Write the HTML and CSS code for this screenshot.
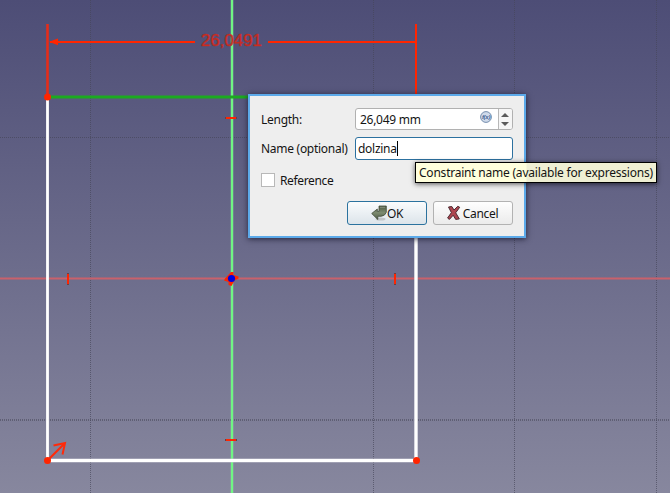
FILE: index.html
```html
<!DOCTYPE html>
<html lang="en">
<head>
<meta charset="utf-8">
<title>Sketch length constraint</title>
<link rel="stylesheet" href="styles.css">
</head>
<body>
<main class="viewport">
  <svg class="sketch" width="670" height="493" viewBox="0 0 670 493">
    <g class="grid">
      <path d="M90.5 0V493M373.5 0V493M514.5 0V493M656.5 0V493M0 137.5H670"/>
      <path class="grid-strong" d="M0 420H670"/>
    </g>
    <path class="axis-x" d="M0 278.5H670"/>
    <path class="axis-y-soft" d="M232 0V493"/>
    <path class="axis-y" d="M232 0V493"/>
    <path class="edge-soft" d="M416 97V460.5H47.5"/>
    <path class="edge" d="M47.5 97V460.5H416V97"/>
    <path class="edge-selected" d="M47 97H416"/>
    <path class="dimension dimension-left" d="M47.5 24V97"/>
    <path class="dimension" d="M416 24V97M50 42H195M268 42H416"/>
    <path class="marker" d="M49 41.7L58 38.5V45.2Z"/>
    <text class="dimension-text" x="201" y="46" textLength="61" lengthAdjust="spacingAndGlyphs">26,0491</text>
    <g class="tick-shadow"><path d="M225 118H237M225 440H237M68 273V285M395 273V285"/></g>
    <g class="tick"><path d="M226 118H236M226 440H236M68 274V284M395 274V284"/></g>
    <path class="marker" d="M231 272h2.500v3l5 1.500v2l-4 2-3 5.500-3-1v-3l-4.500-1.500 1-2z"/>
    <circle class="origin" cx="231.5" cy="278.5" r="3.6"/>
    <circle class="marker" cx="47.5" cy="97" r="3.5"/>
    <circle class="marker" cx="47.5" cy="460.5" r="3.5"/>
    <circle class="marker" cx="416.5" cy="460.5" r="3.5"/>
    <path class="arrow" d="M49 459L65 443M53.5 445.5L65 443L62.5 454.5"/>
  </svg>

  <form class="dialog">
    <div class="row row-length">
      <span class="label">Length:</span>
      <div class="field spin">
        <span class="value">26,049 mm</span>
        <svg class="expression" width="12" height="12" viewBox="0 0 12 12">
          <circle cx="6" cy="6" r="5.4"/>
          <text x="6" y="8.2" text-anchor="middle">f(x)</text>
        </svg>
        <svg class="stepper" width="14" height="20" viewBox="0 0 14 20">
          <path class="divider" d="M.5 0V20"/>
          <path class="step" d="M3 8L7 4L11 8ZM3 13H11L7 17Z"/>
        </svg>
      </div>
    </div>
    <div class="row row-name">
      <span class="label">Name (optional)</span>
      <div class="field name"><span>dolzina</span><i class="caret"></i></div>
    </div>
    <div class="row row-reference">
      <span class="checkbox"></span><span class="label-reference">Reference</span>
    </div>
    <div class="row buttons">
      <button type="button" class="button default">
        <svg width="16" height="16" viewBox="0 0 16 16">
          <defs><linearGradient id="leaf" x2="0" y2="1"><stop stop-color="#4e5b43"/><stop offset=".5" stop-color="#7d8b70"/><stop offset="1" stop-color="#4d5a43"/></linearGradient></defs>
          <ellipse cx="9.5" cy="14" rx="5" ry="1.5" fill="#c0c4c7"/>
          <path d="M8 1H15.3V7.3Q14 11 10 11.3H6.8V14.5L.7 8.5L6.3 4V6.3H8Z" fill="url(#leaf)" stroke="#414b39" stroke-width=".8"/>
          <path d="M9 2.3H14.2" stroke="#87917f"/>
        </svg><span>OK</span>
      </button>
      <button type="button" class="button cancel">
        <svg width="16" height="16" viewBox="0 0 16 16">
          <path d="M2.5 2L5.8 1.5L8 5L11.8 1.3L13.7 2.3L9.7 7.8L13.3 13.9L9.7 14.4L7.2 10.2L3.4 14.4L1.6 13L5.4 7.6Z" fill="#ae4650" stroke="#4c2930" stroke-width="1"/>
        </svg><span>Cancel</span>
      </button>
    </div>
  </form>

  <div class="tooltip"><span>Constraint name (available for expressions)</span></div>
</main>
</body>
</html>
```

FILE: styles.css
```css
* { box-sizing: border-box; }
body { margin: 0; overflow: hidden; }
.viewport {
  position: relative;
  width: 670px;
  height: 493px;
  overflow: hidden;
  background: linear-gradient(#4d4d76, #87879e);
  font: 12px/16px "Noto Sans", "Open Sans", sans-serif;
  letter-spacing: -.28px;
  color: #141414;
}
.sketch { display: block; letter-spacing: 0; }
.sketch path { fill: none; }
.grid path { stroke: #454557; stroke-width: 1; stroke-dasharray: 1 1; opacity: .65; }
.grid .grid-strong { stroke-width: 2; opacity: .55; }
.sketch .axis-x { stroke: #d95f66; stroke-width: 2; opacity: .85; }
.sketch .axis-y-soft { stroke: #96d9a4; stroke-width: 3; opacity: .5; }
.sketch .axis-y { stroke: #70f584; stroke-width: 2; }
.sketch .edge-soft { stroke: #d4d4de; stroke-width: 4; opacity: .7; }
.sketch .edge { stroke: #fff; stroke-width: 2.8; }
.sketch .edge-selected { stroke: #1caa20; stroke-width: 3; }
.sketch .dimension { stroke: #ff2500; stroke-width: 2; }
.sketch .dimension-left { stroke: #e52d1a; stroke-width: 2.6; }
.sketch .marker { fill: #ff2500; }
.tick-shadow path { stroke: #6b3f45; stroke-width: 2; }
.tick path { stroke: #ff2500; stroke-width: 2; }
.sketch .origin { fill: #0000e2; }
.sketch .arrow { stroke: #ff2a0a; stroke-width: 2; }
.dimension-text {
  fill: #e22a18;
  stroke: #a53030;
  stroke-width: .6;
  font: 17px "Liberation Sans", sans-serif;
}
.dialog {
  position: absolute;
  left: 248px;
  top: 94px;
  display: flex;
  flex-direction: column;
  width: 278px;
  height: 144px;
  padding: 12px 11px 11px;
  border: 2px solid #5caaea;
  background: #eee;
  box-shadow: 0 1px 6px rgba(15, 15, 35, .75);
}
.row { display: flex; align-items: center; }
.label { width: 94px; padding-top: 1px; white-space: nowrap; }
.field {
  display: flex;
  align-items: center;
  width: 158px;
  border: 1px solid #b1b1b1;
  border-radius: 3px;
  background: #fff;
}
.row-length { height: 22px; }
.row-length .label { padding-top: 2px; }
.row-name { height: 23px; margin-top: 7px; }
.spin { height: 22px; padding-left: 4px; }
.value { flex: 1; padding-top: 2px; }
.expression { margin: -5px 6px 0 0; }
.expression circle { fill: #cfdaea; stroke: #758eae; }
.expression text { fill: #3f6294; font: italic bold 6px "Liberation Sans", sans-serif; }
.stepper { background: #f6f6f6; border-radius: 0 2px 2px 0; }
.divider { stroke: #b8b8b8; }
.sketch ~ .dialog .step { fill: #5b5b5b; }
.name { height: 23px; padding-left: 2px; border-color: #2c71a0; }
.name span { padding-top: 1px; }
.caret { width: 1px; height: 15px; background: #000; }
.row-reference { height: 14px; margin-top: 13px; gap: 5px; }
.label-reference { padding-top: 2px; letter-spacing: -.35px; }
.checkbox { width: 14px; height: 14px; border: 1px solid #b8b8b8; background: #fff; }
.buttons { margin-top: 14px; justify-content: flex-end; gap: 6px; }
.button {
  display: flex;
  align-items: center;
  justify-content: center;
  width: 80px;
  height: 24px;
  padding: 0;
  border: 1px solid #b2b2b2;
  border-radius: 3px;
  background: linear-gradient(#fefefe, #ebebeb);
  color: #141414;
  font: inherit;
  letter-spacing: inherit;
}
.button span { padding-top: 2px; }
.default { border-color: #2b729e; background: linear-gradient(#fafcfd, #dce4ea); }
.button svg { margin-right: 1px; }
.cancel { padding-right: 2px; }
.default svg { margin-right: 0; }
.tooltip {
  position: absolute;
  left: 415px;
  top: 162px;
  width: 242px;
  height: 21px;
  padding: 2px 3px;
  border: 1px solid #000;
  background: linear-gradient(90deg, #ffffdc 0 110px, #efefd3 111px);
  box-shadow: 0 1px 5px rgba(0, 0, 0, .65);
  letter-spacing: -.22px;
  white-space: nowrap;
}
```
